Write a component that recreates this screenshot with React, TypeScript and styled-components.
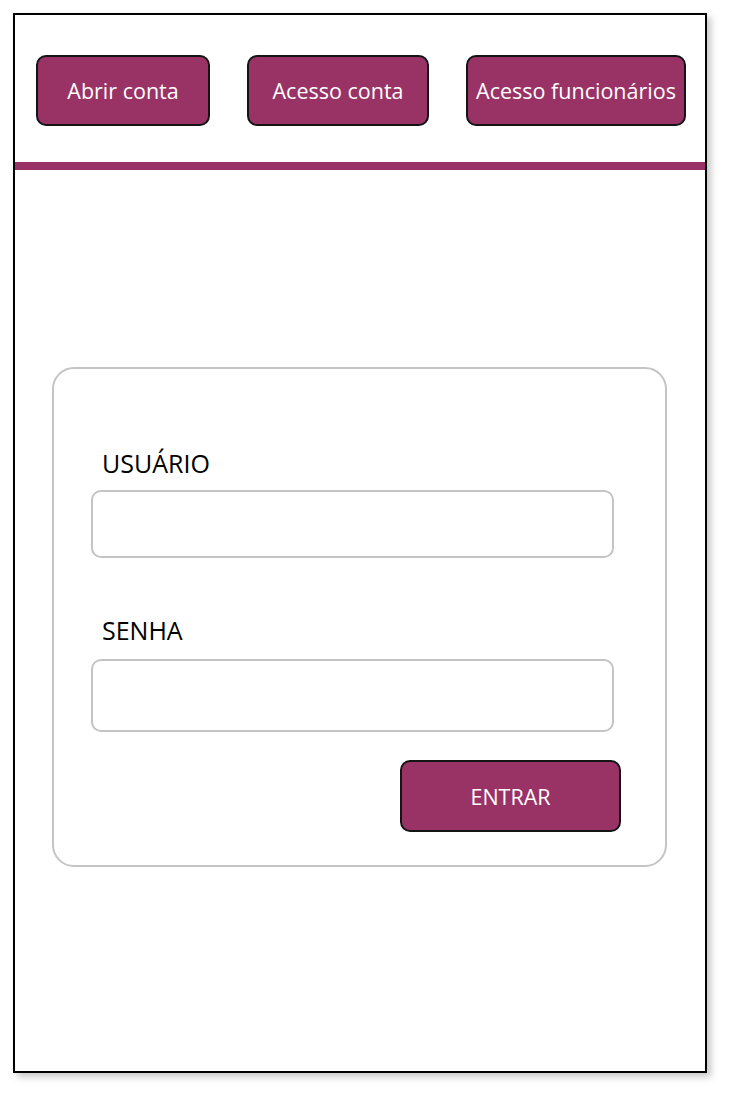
import React from "react";
import styled, { createGlobalStyle } from "styled-components";

const Global = createGlobalStyle`
  html, body { margin: 0; padding: 0; background: #ffffff; }
  body { font-family: "Open Sans", "DejaVu Sans", sans-serif; }
  * { box-sizing: border-box; }
`;

const Page = styled.div`
  padding: 13px 0 0 13px;
  width: 729px;
  height: 1095px;
`;

const Frame = styled.div`
  width: 694px;
  height: 1060px;
  border: 2px solid #000;
  background: #fff;
  box-shadow: 4px 4px 7px rgba(0, 0, 0, 0.22);
  display: flex;
  flex-direction: column;
`;

const Nav = styled.nav`
  display: flex;
  justify-content: space-between;
  align-items: center;
  padding: 40px 19px 0 21px;
`;

const NavButton = styled.button<{ $w: number }>`
  width: ${(p) => p.$w}px;
  height: 71px;
  background: #993366;
  border: 2px solid #141414;
  border-radius: 10px;
  color: #fff;
  font-family: "Open Sans", sans-serif;
  font-size: 21.5px;
  padding: 0;
  white-space: nowrap;
  display: flex;
  align-items: center;
  justify-content: center;
  cursor: pointer;
`;

const Bar = styled.div`
  height: 8px;
  margin-top: 36px;
  background: #993366;
`;

const Card = styled.form`
  margin: 197px 0 0 37px;
  width: 615px;
  height: 500px;
  border: 2px solid #c4c4c4;
  border-radius: 22px;
  padding: 80px 0 0 37px;
  display: flex;
  flex-direction: column;
  align-items: flex-start;
`;

const Label = styled.label<{ $top?: number }>`
  display: block;
  margin: ${(p) => p.$top ?? 0}px 0 0 11px;
  font-family: "Open Sans", sans-serif;
  font-size: 25px;
  line-height: 28px;
  color: #000;
`;

const Input = styled.input<{ $h: number; $top: number }>`
  width: 523px;
  height: ${(p) => p.$h}px;
  margin-top: ${(p) => p.$top}px;
  border: 2px solid #c4c4c4;
  border-radius: 10px;
  background: #fff;
  outline: none;
`;

const SubmitRow = styled.div`
  width: 530px;
  display: flex;
  justify-content: flex-end;
  margin-top: 28px;
`;

const Submit = styled.button`
  width: 221px;
  height: 72px;
  background: #993366;
  border: 2px solid #141414;
  border-radius: 10px;
  color: #fff;
  font-family: "Open Sans", sans-serif;
  font-size: 21.5px;
  cursor: pointer;
`;

export default function App() {
  return (
    <>
      <Global />
      <Page>
        <Frame>
          <Nav>
            <NavButton $w={174}>Abrir conta</NavButton>
            <NavButton $w={182}>Acesso conta</NavButton>
            <NavButton $w={220}>Acesso funcionários</NavButton>
          </Nav>
          <Bar />
          <Card onSubmit={(e) => e.preventDefault()}>
            <Label htmlFor="usuario">USUÁRIO</Label>
            <Input id="usuario" type="text" $h={68} $top={13} />
            <Label htmlFor="senha" $top={58}>SENHA</Label>
            <Input id="senha" type="password" $h={73} $top={15} />
            <SubmitRow>
              <Submit type="submit">ENTRAR</Submit>
            </SubmitRow>
          </Card>
        </Frame>
      </Page>
    </>
  );
}
